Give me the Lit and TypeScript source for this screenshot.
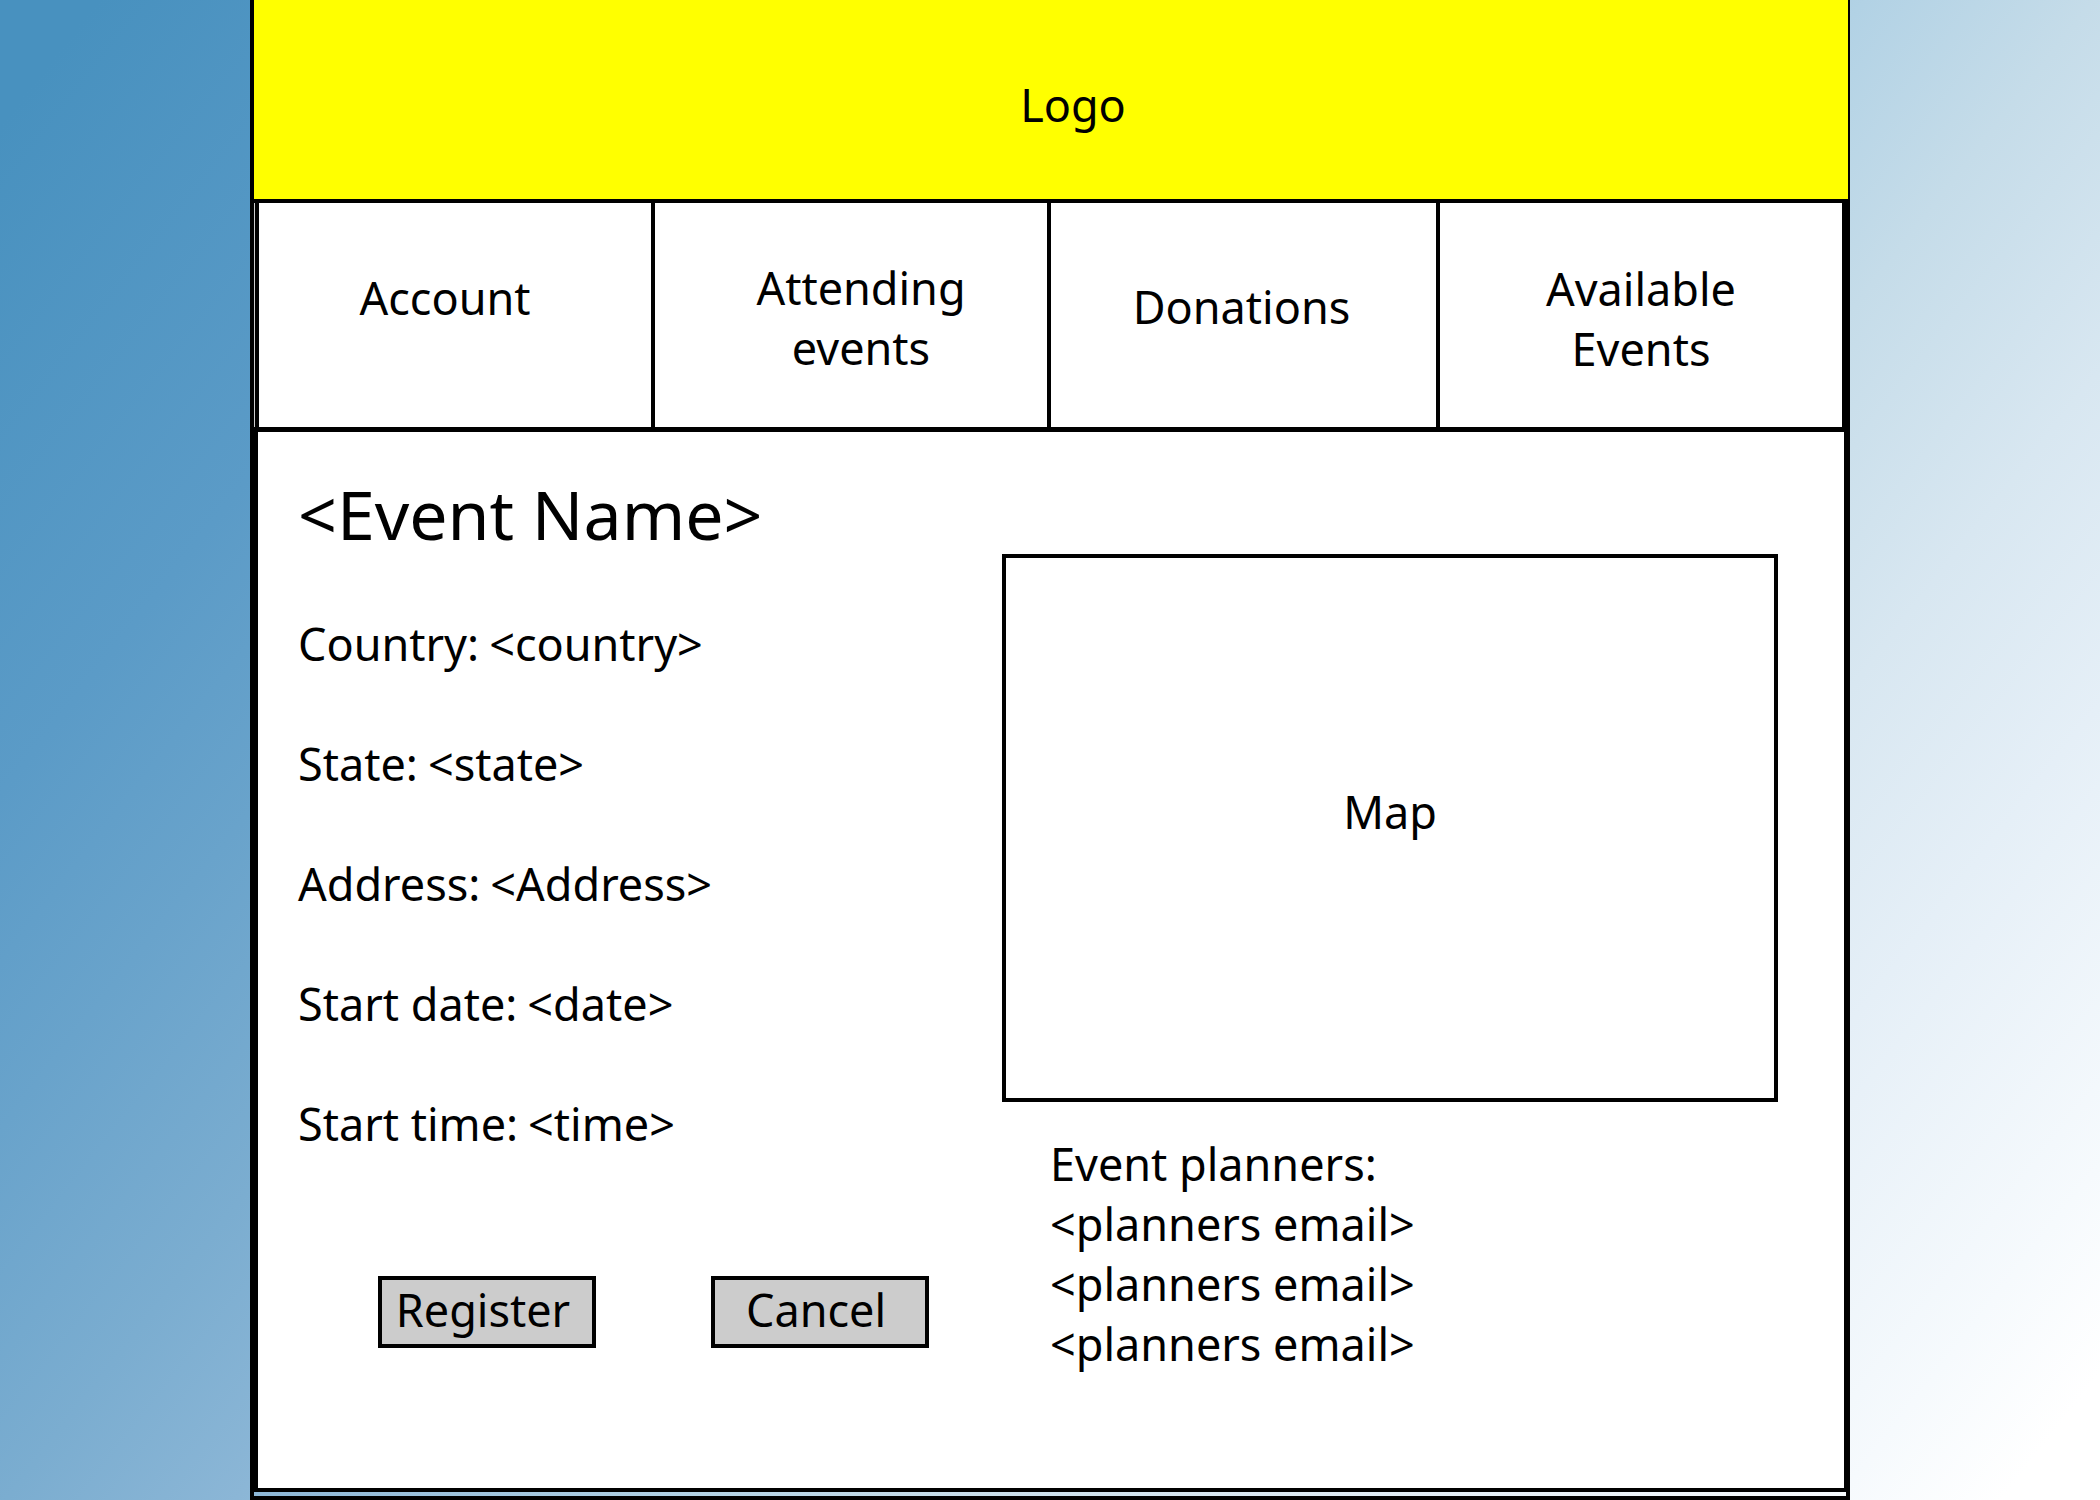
import { LitElement, html, css } from "lit";
import { customElement } from "lit/decorators.js";

const NAV = [
  { id: "account", lines: ["Account"] },
  { id: "attending", lines: ["Attending", "events"] },
  { id: "donations", lines: ["Donations"] },
  { id: "available", lines: ["Available", "Events"] },
];
const DETAILS = [
  ["Country", "<country>"],
  ["State", "<state>"],
  ["Address", "<Address>"],
  ["Start date", "<date>"],
  ["Start time", "<time>"],
];
const PLANNERS = ["<planners email>", "<planners email>", "<planners email>"];

@customElement("app-root")
export class AppRoot extends LitElement {
  static styles = css`
    :host {
      display: block;
      min-height: 100vh;
      box-sizing: border-box;
      padding: 0 250px;
      color: #000;
      font: 45px/60px "Noto Sans", "Open Sans", sans-serif;
      background: linear-gradient(
        128deg,
        #4891bf 3%,
        #5b9bc7 19%,
        #69a3cb 27%,
        #7badd0 36%,
        #8bb6d6 43%,
        #b2d2e5 57%,
        #c5dce9 64%,
        #d8e7f1 73%,
        #e5eff7 81%,
        #f6fafd 92%,
        #fff 97%
      );
    }
    * { box-sizing: border-box; }
    .frame {
      display: flex;
      flex-direction: column;
      min-height: 100vh;
      border: solid #000;
      border-width: 0 4px 4px;
    }
    .logo {
      display: flex;
      align-items: center;
      justify-content: center;
      height: 199px;
      margin-right: -2px;
      padding: 10px 0 0 44px;
      background: #ff0;
    }
    .nav {
      display: grid;
      grid-template-columns: 396fr 396fr 389fr 406fr;
      height: 233px;
      border: solid #000;
      border-width: 4px 4px 5px 0;
      box-shadow: inset 1px 0 #ccc;
      padding-left: 1px;
      background: #fff;
    }
    .nav-link {
      display: flex;
      flex-direction: column;
      align-items: center;
      justify-content: center;
      border-left: 4px solid #000;
      color: inherit;
      text-decoration: none;
    }
    .account { padding: 0 20px 34px 0; }
    .attending { padding: 6px 0 0 20px; }
    .donations { padding: 0 4px 16px 0; }
    .available { padding-top: 8px; }
    .main {
      flex: 1;
      display: grid;
      grid-template-columns: 744fr 842fr;
      margin-bottom: 4px;
      border: solid #000;
      border-width: 0 2px 4px 4px;
      background: #fff;
    }
    .details { padding: 38px 0 0 40px; }
    .title { margin: 0; font-size: 68px; line-height: 88px; font-weight: 400; }
    .fields { display: grid; gap: 60px; margin: 56px 0 0; }
    .field { display: flex; gap: 10px; }
    .value { margin: 0; }
    .actions { display: flex; gap: 115px; margin: 122px 0 0 80px; }
    .button {
      width: 218px;
      height: 72px;
      padding: 0 8px 4px 0;
      border: 4px solid #000;
      border-radius: 0;
      background: #ccc;
      color: inherit;
      font: inherit;
    }
    .side { padding: 122px 66px 0 0; }
    .map {
      display: flex;
      align-items: center;
      justify-content: center;
      height: 548px;
      padding-bottom: 32px;
      border: 4px solid #000;
    }
    .planners { padding: 32px 0 0 48px; }
    .planners-title { margin: 0; font: inherit; }
    .planner-list { list-style: none; margin: 0; padding: 0; }
  `;

  render() {
    return html`
      <div class="frame">
        <header class="logo">Logo</header>
        <nav class="nav">
          ${NAV.map(
            ({ id, lines }) => html`<a class="nav-link ${id}" href="#${id}">${lines.map((line) => html`<span>${line}</span>`)}</a>`
          )}
        </nav>
        <main class="main">
          <section class="details">
            <h1 class="title">&lt;Event Name&gt;</h1>
            <dl class="fields">
              ${DETAILS.map(
                ([label, value]) => html`<div class="field"><dt>${label}:</dt><dd class="value">${value}</dd></div>`
              )}
            </dl>
            <div class="actions">
              <button class="button" type="button">Register</button>
              <button class="button" type="button">Cancel</button>
            </div>
          </section>
          <section class="side">
            <div class="map">Map</div>
            <div class="planners">
              <h2 class="planners-title">Event planners:</h2>
              <ul class="planner-list">${PLANNERS.map((planner) => html`<li>${planner}</li>`)}</ul>
            </div>
          </section>
        </main>
      </div>
    `;
  }
}
